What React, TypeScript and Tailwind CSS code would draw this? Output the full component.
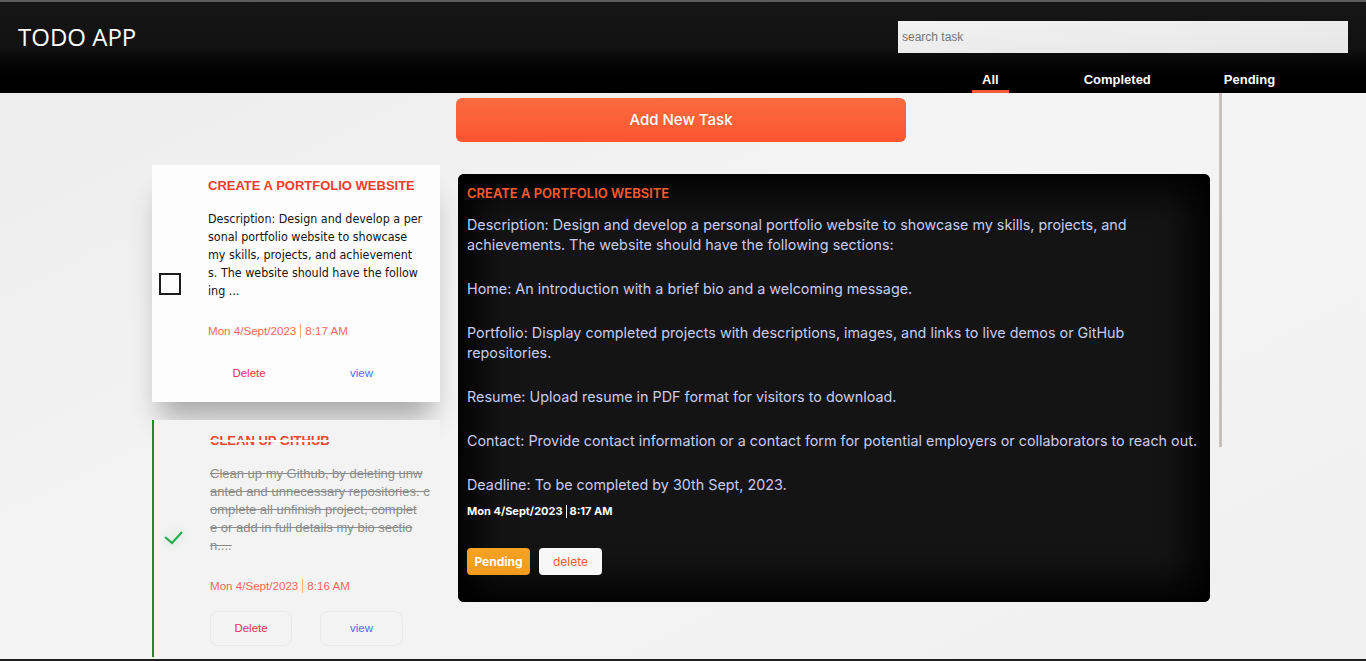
import React from 'react';

const detailParagraphs = [
  'Description: Design and develop a personal portfolio website to showcase my skills, projects, and achievements. The website should have the following sections:',
  'Home: An introduction with a brief bio and a welcoming message.',
  'Portfolio: Display completed projects with descriptions, images, and links to live demos or GitHub repositories.',
  'Resume: Upload resume in PDF format for visitors to download.',
  'Contact: Provide contact information or a contact form for potential employers or collaborators to reach out.',
  'Deadline: To be completed by 30th Sept, 2023.',
];

function Header() {
  return (
    <header className="flex h-[91px] justify-between bg-gradient-to-b from-[#161616] via-[#111111] to-black">
      <h1 className="pl-[18px] pt-[19px] font-['Open_Sans',sans-serif] text-[24px] leading-[32px] text-white">TODO APP</h1>
      <div className="mr-[18px] w-[450px] pt-[19px]">
        <input
          type="text"
          placeholder="search task"
          className="block h-[32px] w-full bg-gradient-to-br from-[#f2f2f2] to-[#e6e6e6] px-[4px] font-['Liberation_Sans',Arial,sans-serif] text-[12px] text-[#333] outline-none placeholder:text-[#757575]"
        />
        <nav className="mt-[19px] flex font-['Liberation_Sans',Arial,sans-serif] text-[13px] font-bold leading-[16px] text-white">
          <span className="ml-[74px] border-b-[3px] border-[#fe5a33] px-[10px] pb-[2px]">All</span>
          <span className="ml-[65px] border-b-[3px] border-transparent px-[10px] pb-[2px]">Completed</span>
          <span className="ml-[53px] border-b-[3px] border-transparent px-[10px] pb-[2px]">Pending</span>
        </nav>
      </div>
    </header>
  );
}

function TaskCard({
  title,
  lines,
  date,
  done,
}: {
  title: string;
  lines: string[];
  date: string;
  done?: boolean;
}) {
  return (
    <div
      className={
        done
          ? 'flex h-[237px] border-l-2 border-[#1a8f1a] bg-[#f3f3f3]'
          : 'flex h-[237px] bg-[#fdfdfd] shadow-[0_24px_26px_-8px_rgba(0,0,0,0.3)]'
      }
    >
      <div className={done ? 'flex w-[56px] items-center pl-[9px]' : 'flex w-[56px] items-center pl-[7px]'}>
        {done ? (
          <svg width="22" height="16" viewBox="0 0 22 16" className="-mt-[2px] drop-shadow-[0_0_6px_rgba(34,176,75,0.35)]">
            <polyline points="2,7 9,13 19,2" fill="none" stroke="#22ad4b" strokeWidth="2" />
          </svg>
        ) : (
          <div className="h-[22px] w-[22px] border-2 border-[#1c1c1c]" />
        )}
      </div>
      <div className="flex w-[226px] flex-col pt-[13px]">
        <h3
          className={
            done
              ? "font-['Liberation_Sans',Arial,sans-serif] text-[13px] font-bold leading-[16px] text-[#f2452e] line-through decoration-white decoration-2"
              : "font-['Liberation_Sans',Arial,sans-serif] text-[13px] font-bold leading-[16px] text-[#ee3d2f]"
          }
        >
          {title}
        </h3>
        <p
          className={
            done
              ? "mt-[16px] whitespace-nowrap font-['Liberation_Sans',Arial,sans-serif] text-[13px] leading-[18px] text-[#8c8c8c] line-through decoration-[#8c8c8c]"
              : "mt-[16px] whitespace-nowrap font-['DejaVu_Sans_Condensed','Liberation_Sans',sans-serif] text-[12.4px] leading-[18px] text-[#151515]"
          }
        >
          {lines.map((l, i) => (
            <span key={i} className="block">
              {l}
            </span>
          ))}
        </p>
        <div className="mt-[24px] flex items-center font-['Liberation_Sans',Arial,sans-serif] text-[11.6px] leading-[14px] text-[#f26a5c]">
          <span>{date.split(' | ')[0]}</span>
          <span className="mx-[4px] h-[14px] w-px bg-[#f7b27a]" />
          <span>{date.split(' | ')[1]}</span>
        </div>
        <div className={`mt-[18px] flex font-['Liberation_Sans',Arial,sans-serif] text-[11.5px] ${done ? 'gap-[28px]' : 'gap-[30px]'}`}>
          <button className={`h-[35px] w-[82px] rounded-lg border text-[#e8304e] ${done ? 'border-[#e9e9e9]' : 'border-transparent'}`}>
            Delete
          </button>
          <button className={`h-[35px] w-[83px] rounded-lg border text-[#5a67f2] ${done ? 'border-[#e9e9e9]' : 'border-transparent'}`}>
            view
          </button>
        </div>
      </div>
    </div>
  );
}

function TaskDetail() {
  return (
    <div className="mt-[9px] w-[752px] rounded-md bg-[#141414] px-[9px] pb-[27px] pt-[11px] font-['Inter',sans-serif] shadow-[inset_0_0_36px_18px_#000]">
      <h2 className="text-[13px] font-semibold leading-[16px] text-[#ff5a30]">CREATE A PORTFOLIO WEBSITE</h2>
      <div className="mt-[14px] space-y-[24px] text-[14.35px] leading-[20px] text-[#c9cbef]">
        {detailParagraphs.map((p) => (
          <p key={p}>{p}</p>
        ))}
      </div>
      <div className="mt-[9px] flex items-center text-[11px] font-bold leading-[14px] text-white">
        <span>Mon 4/Sept/2023</span>
        <span className="mx-[3px] h-[13px] w-px bg-white" />
        <span>8:17 AM</span>
      </div>
      <div className="mt-[30px] flex gap-[9px] text-[12px]">
        <button className="h-[27px] w-[63px] rounded-[4px] bg-gradient-to-b from-[#f7a224] to-[#f39a1c] font-bold text-white">
          Pending
        </button>
        <button className="h-[27px] w-[63px] rounded-[4px] bg-[#f7f7f7] text-[#fb5a2f]">delete</button>
      </div>
    </div>
  );
}

export default function App() {
  return (
    <div className="relative h-[661px] overflow-hidden border-t-2 border-[#5c5c5c] bg-gradient-to-br from-[#ececec] via-[#f4f4f4] to-[#f0f0f0]">
      <Header />
      <main className="ml-[152px] w-[1058px]">
        <div className="flex justify-center pt-[5px]">
          <button className="h-[44px] w-[450px] rounded-md bg-gradient-to-b from-[#fb6b40] to-[#fc5530] font-['Inter',sans-serif] text-[15px] font-medium text-white">
            Add New Task
          </button>
        </div>
        <div className="mt-[23px] flex gap-[18px]">
          <div className="flex w-[288px] flex-col gap-[18px]">
            <TaskCard
              title="CREATE A PORTFOLIO WEBSITE"
              lines={[
                'Description: Design and develop a per',
                'sonal portfolio website to showcase',
                'my skills, projects, and achievement',
                's. The website should have the follow',
                'ing ...',
              ]}
              date="Mon 4/Sept/2023 | 8:17 AM"
            />
            <TaskCard
              title="CLEAN UP GITHUB"
              lines={[
                'Clean up my Github, by deleting unw',
                'anted and unnecessary repositories. c',
                'omplete all unfinish project, complet',
                'e or add in full details my bio sectio',
                'n....',
              ]}
              date="Mon 4/Sept/2023 | 8:16 AM"
              done
            />
          </div>
          <div>
            <TaskDetail />
          </div>
        </div>
      </main>
      <div className="absolute left-[1219px] top-[91px] h-[354px] w-[3px] bg-[#c9bfbf]" />
      <div className="absolute bottom-0 left-0 h-[2px] w-full bg-[#1e1e1e]" />
    </div>
  );
}
